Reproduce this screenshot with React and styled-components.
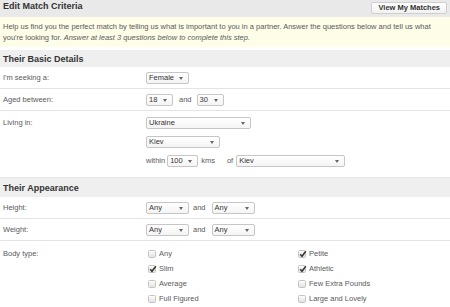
import React from "react";
import styled, { createGlobalStyle } from "styled-components";

const Global = createGlobalStyle`
  html, body { margin: 0; padding: 0; background: #fff; }
  body { font-family: "Liberation Sans", Arial, sans-serif; width: 450px; overflow: hidden; }
`;

const Page = styled.div`
  width: 450px;
  color: #555;
  font-size: 7.5px;
`;

const TitleBar = styled.div`
  height: 17px;
  background: #e9e9e9;
  display: flex;
  justify-content: space-between;
  align-items: flex-start;
  padding: 0 3px 0 3px;
  box-sizing: border-box;
`;

const Title = styled.h1`
  margin: 0;
  font-size: 9px;
  line-height: 13px;
  font-weight: bold;
  color: #333;
`;

const Button = styled.button`
  margin-top: 1.5px;
  height: 12px;
  padding: 0 6px;
  font-family: inherit;
  font-size: 7.5px;
  font-weight: bold;
  color: #333;
  background: linear-gradient(#ffffff, #f1f1f1);
  border: 1px solid #cfcfcf;
  border-radius: 2px;
  line-height: 10px;
`;

const Info = styled.div`
  background: #fdfde8;
  padding: 4px 3px 4px;
  height: 30px;
  box-sizing: border-box;
  line-height: 11px;
  color: #5a5a5a;
  margin-bottom: 3px;
`;

const Note = styled.em`
  font-style: italic;
`;

const SectionHeader = styled.h2`
  margin: 0;
  height: ${(p) => p.$h || 17}px;
  background: #efefef;
  display: flex;
  align-items: center;
  padding-left: 3px;
  font-size: 9px;
  font-weight: bold;
  color: #333;
  border-top: ${(p) => (p.$top ? "1px solid #e4e4e4" : "none")};
  box-sizing: border-box;
`;

const Row = styled.div`
  display: grid;
  grid-template-columns: 146px 1fr;
  padding: ${(p) => p.$pad || "5px 0 4px"};
  border-bottom: ${(p) => (p.$last ? "none" : "1px solid #e3e3e3")};
`;

const Label = styled.div`
  padding-left: 3px;
  line-height: ${(p) => p.$lh || 12}px;
  color: #5a5a5a;
`;

const Controls = styled.div`
  display: flex;
  flex-direction: column;
  gap: ${(p) => p.$gap || 0}px;
`;

const Line = styled.div`
  display: flex;
  align-items: center;
  height: 12px;
`;

const Text = styled.span`
  line-height: 12px;
  margin: ${(p) => p.$m || "0"};
  color: #5a5a5a;
`;

const SelectBox = styled.div`
  position: relative;
  width: ${(p) => p.$w}px;
  height: 12px;
  box-sizing: border-box;
  border: 1px solid #c6c6c6;
  border-radius: 2px;
  background: linear-gradient(#ffffff, #f4f4f4);
  color: #333;
  padding-left: 2px;
  line-height: 10px;
  font-size: 7.5px;
`;

const Arrow = styled.span`
  position: absolute;
  right: 5px;
  top: 4px;
  width: 0;
  height: 0;
  border-left: 2.5px solid transparent;
  border-right: 2.5px solid transparent;
  border-top: 3px solid #666;
`;

const Select = ({ w, children }) => (
  <SelectBox $w={w}>
    {children}
    <Arrow />
  </SelectBox>
);

const CheckGrid = styled.div`
  display: grid;
  grid-template-columns: 150px 1fr;
  grid-auto-rows: 15px;
  padding-left: 2px;
`;

const CheckItem = styled.label`
  display: flex;
  align-items: center;
  gap: 3px;
  color: #5a5a5a;
`;

const Box = styled.span`
  width: 8px;
  height: 8px;
  box-sizing: border-box;
  border: 1px solid #c4c4c4;
  border-radius: 1.5px;
  background: linear-gradient(#fdfdfd, #e2e2e2);
  position: relative;
  display: inline-block;
`;

const Tick = styled.svg`
  position: absolute;
  left: 0;
  top: -1px;
`;

const Check = ({ checked, children }) => (
  <CheckItem>
    <Box>
      {checked && (
        <Tick width="8" height="8" viewBox="0 0 8 8">
          <path d="M1.2 4.2 L3 6.2 L6.8 1.2" fill="none" stroke="#333" strokeWidth="1.5" />
        </Tick>
      )}
    </Box>
    {children}
  </CheckItem>
);

export default function App() {
  return (
    <Page>
      <Global />
      <TitleBar>
        <Title>Edit Match Criteria</Title>
        <Button>View My Matches</Button>
      </TitleBar>
      <Info>
        Help us find you the perfect match by telling us what is important to you in a partner. Answer the questions below and tell us what you're looking for.{" "}
        <Note>Answer at least 3 questions below to complete this step.</Note>
      </Info>

      <SectionHeader>Their Basic Details</SectionHeader>
      <Row>
        <Label>I'm seeking a:</Label>
        <Controls>
          <Line>
            <Select w={43}>Female</Select>
          </Line>
        </Controls>
      </Row>
      <Row>
        <Label>Aged between:</Label>
        <Controls>
          <Line>
            <Select w={27}>18</Select>
            <Text $m="0 5px 0 6px">and</Text>
            <Select w={27}>30</Select>
          </Line>
        </Controls>
      </Row>
      <Row $pad="6px 0 10px" $last>
        <Label>Living in:</Label>
        <Controls $gap={7}>
          <Line>
            <Select w={105}>Ukraine</Select>
          </Line>
          <Line>
            <Select w={74}>Kiev</Select>
          </Line>
          <Line>
            <Text $m="0 2px 0 0">within</Text>
            <Select w={31}>100</Select>
            <Text $m="0 0 0 3px">kms</Text>
            <Text $m="0 3px 0 12px">of</Text>
            <Select w={109}>Kiev</Select>
          </Line>
        </Controls>
      </Row>

      <SectionHeader $h={20} $top>Their Appearance</SectionHeader>
      <Row $pad="5px 0 4px">
        <Label>Height:</Label>
        <Controls>
          <Line>
            <Select w={43}>Any</Select>
            <Text $m="0 6px 0 4px">and</Text>
            <Select w={43}>Any</Select>
          </Line>
        </Controls>
      </Row>
      <Row>
        <Label>Weight:</Label>
        <Controls>
          <Line>
            <Select w={43}>Any</Select>
            <Text $m="0 6px 0 4px">and</Text>
            <Select w={43}>Any</Select>
          </Line>
        </Controls>
      </Row>
      <Row $pad="5px 0 4px" $last>
        <Label $lh={15}>Body type:</Label>
        <CheckGrid>
          <Check>Any</Check>
          <Check checked>Petite</Check>
          <Check checked>Slim</Check>
          <Check checked>Athletic</Check>
          <Check>Average</Check>
          <Check>Few Extra Pounds</Check>
          <Check>Full Figured</Check>
          <Check>Large and Lovely</Check>
        </CheckGrid>
      </Row>
    </Page>
  );
}
